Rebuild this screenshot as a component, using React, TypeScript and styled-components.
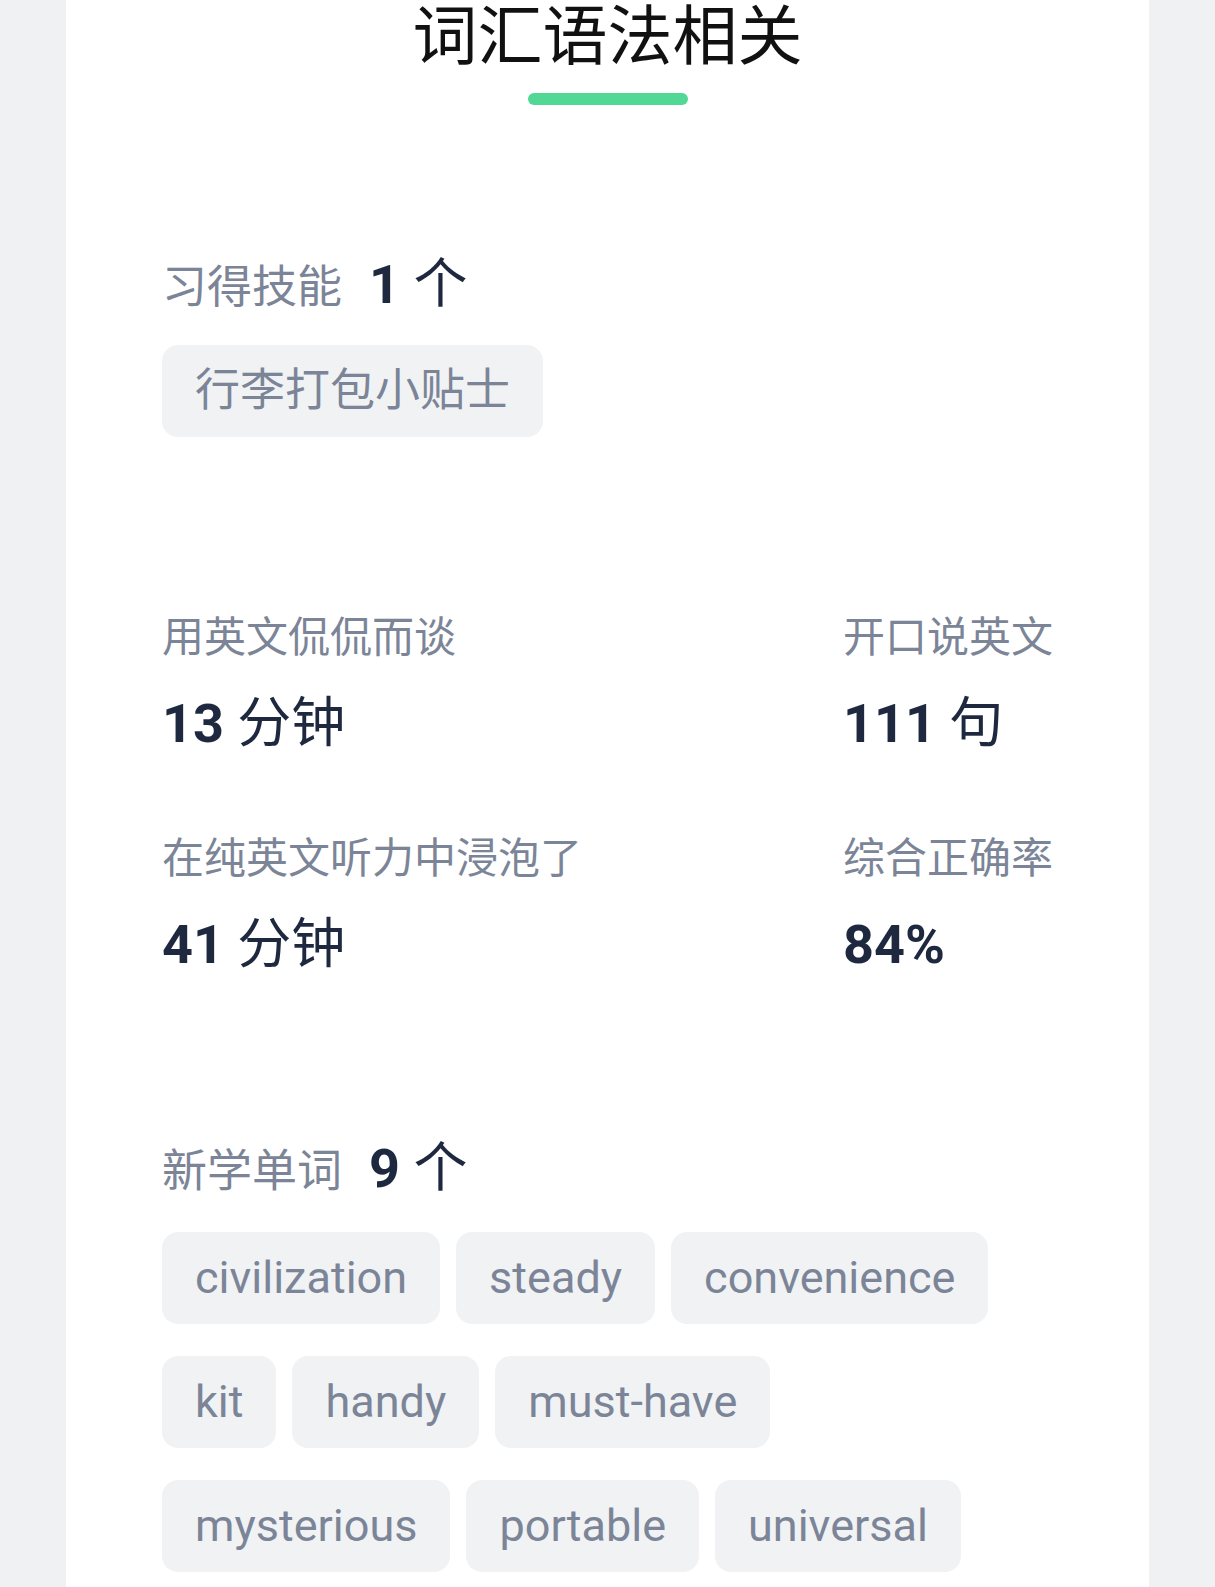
import React from "react";
import styled, { createGlobalStyle } from "styled-components";

const GlobalStyle = createGlobalStyle`
  html, body {
    margin: 0;
    padding: 0;
    background: #f0f1f3;
  }
  body {
    font-family: Roboto, "Noto Sans CJK SC", sans-serif;
  }
`;

const Page = styled.div`
  min-height: 1587px;
  display: flex;
  justify-content: center;
`;

const Card = styled.main`
  width: 1083px;
  background: #ffffff;
  box-sizing: border-box;
  padding: 0 96px 0 96px;
  display: flex;
  flex-direction: column;
`;

const Header = styled.header`
  display: flex;
  flex-direction: column;
  align-items: center;
`;

const Title = styled.h1`
  margin: 0;
  font-size: 65px;
  line-height: 74px;
  font-weight: 400;
  color: #111111;
`;

const Underline = styled.div`
  margin-top: 19px;
  width: 160px;
  height: 12px;
  border-radius: 6px;
  background: #52d895;
`;

const Section = styled.section<{ $top: number }>`
  margin-top: ${(p) => p.$top}px;
  display: flex;
  flex-direction: column;
`;

const Heading = styled.h2`
  margin: 0;
  display: flex;
  align-items: baseline;
  font-weight: 400;
`;

const HeadingLabel = styled.span`
  font-size: 45px;
  line-height: 64px;
  color: #7b8597;
`;

const Count = styled.span`
  margin-left: 27px;
  font-size: 54px;
  line-height: 64px;
  color: #1e2940;
`;

const Num = styled.b`
  font-weight: 700;
`;

const ChipList = styled.div<{ $gap: number }>`
  margin-top: ${(p) => p.$gap}px;
  display: flex;
  flex-wrap: wrap;
  gap: 32px 16px;
`;

const Chip = styled.span`
  display: inline-flex;
  align-items: center;
  height: 92px;
  padding: 0 33px;
  box-sizing: border-box;
  border-radius: 16px;
  background: #f1f2f4;
  color: #7b8597;
  font-size: 45px;
  line-height: 60px;
`;

const StatsGrid = styled.div`
  margin-top: 171px;
  display: grid;
  grid-template-columns: 681px 1fr;
  row-gap: 69px;
`;

const Stat = styled.div`
  display: flex;
  flex-direction: column;
`;

const StatLabel = styled.div`
  font-size: 42px;
  line-height: 60px;
  color: #7b8597;
  white-space: nowrap;
`;

const StatValue = styled.div`
  margin-top: 20px;
  font-size: 54px;
  line-height: 72px;
  color: #1e2940;
  white-space: nowrap;
`;

const stats = [
  { label: "用英文侃侃而谈", num: "13", unit: "分钟" },
  { label: "开口说英文", num: "111", unit: "句" },
  { label: "在纯英文听力中浸泡了", num: "41", unit: "分钟" },
  { label: "综合正确率", num: "84%", unit: "" },
];

const words = [
  "civilization",
  "steady",
  "convenience",
  "kit",
  "handy",
  "must-have",
  "mysterious",
  "portable",
  "universal",
];

export default function App() {
  return (
    <>
      <GlobalStyle />
      <Page>
        <Card>
          <Header>
            <Title>词汇语法相关</Title>
            <Underline />
          </Header>

          <Section $top={148}>
            <Heading>
              <HeadingLabel>习得技能</HeadingLabel>
              <Count>
                <Num>1</Num> 个
              </Count>
            </Heading>
            <ChipList $gap={25}>
              <Chip>行李打包小贴士</Chip>
            </ChipList>
          </Section>

          <StatsGrid>
            {stats.map((s) => (
              <Stat key={s.label}>
                <StatLabel>{s.label}</StatLabel>
                <StatValue>
                  <Num>{s.num}</Num>
                  {s.unit ? ` ${s.unit}` : ""}
                </StatValue>
              </Stat>
            ))}
          </StatsGrid>

          <Section $top={156}>
            <Heading>
              <HeadingLabel>新学单词</HeadingLabel>
              <Count>
                <Num>9</Num> 个
              </Count>
            </Heading>
            <ChipList $gap={28}>
              {words.map((w) => (
                <Chip key={w}>{w}</Chip>
              ))}
            </ChipList>
          </Section>
        </Card>
      </Page>
    </>
  );
}
